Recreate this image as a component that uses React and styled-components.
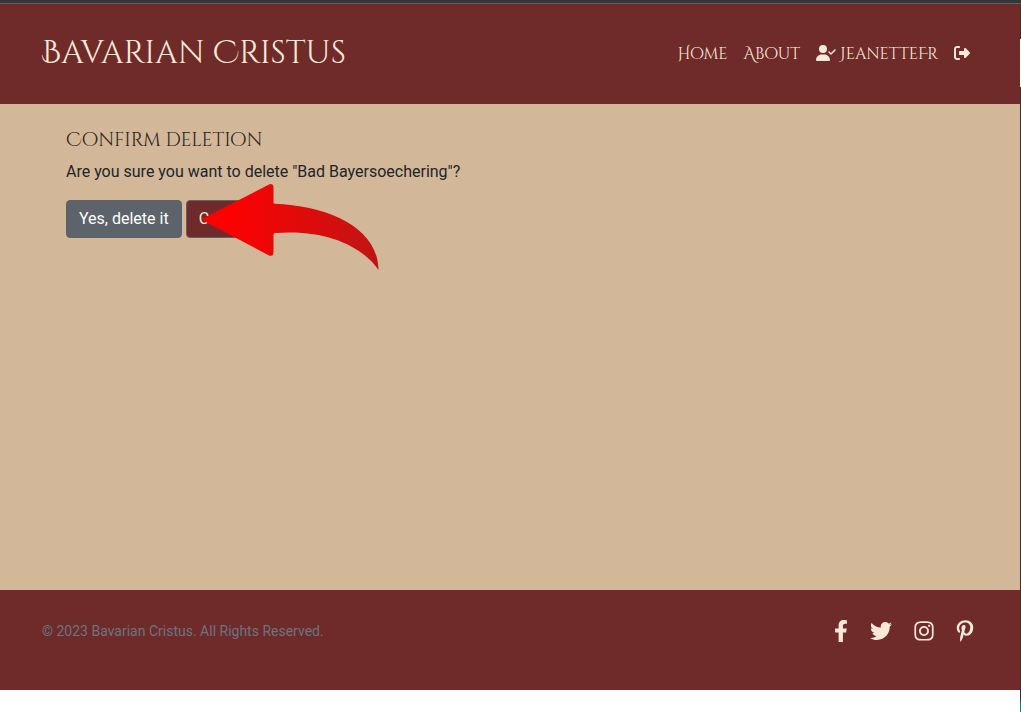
import React from "react";
import styled, { createGlobalStyle } from "styled-components";
import { FaFacebookF } from "react-icons/fa";
import {
  FaUserCheck,
  FaRightFromBracket,
  FaTwitter,
  FaInstagram,
  FaPinterestP,
} from "react-icons/fa6";

const display = `"Cinzel Decorative", "Liberation Serif", serif`;
const wine = "#6f2b2a";
const cream = "#fbe9d7";

const GlobalStyle = createGlobalStyle`
  *, *::before, *::after { box-sizing: border-box; }
  body {
    margin: 0;
    background: #fff;
    color: #212529;
    font: 16px/24px Roboto, sans-serif;
  }
`;

const Frame = styled.div`
  display: flex;
  flex-direction: column;
  min-height: 100vh;
`;

const BrowserBar = styled.div`
  height: 4px;
  background: #35363a;
  border-bottom: 1px solid #5f6064;
`;

const Viewport = styled.div`
  display: flex;
  flex: 1;
`;

const Page = styled.div`
  display: flex;
  flex: 1;
  flex-direction: column;
  min-width: 0;
`;

const Edge = styled.div`
  display: flex;
  flex-direction: column;
  width: 1px;
  background: #303438;
`;

const EdgeMark = styled.div`
  height: ${(p) => p.$height}px;
  margin-top: ${(p) => p.$top};
  background: ${(p) => p.$color};
`;

const Header = styled.header`
  display: flex;
  align-items: center;
  justify-content: space-between;
  height: 100px;
  padding: 0 50px 0 42px;
  background: ${wine};
`;

const Brand = styled.a`
  color: ${cream};
  font: 32px/48px ${display};
  text-decoration: none;
`;

const Nav = styled.nav`
  display: flex;
  align-items: center;
  gap: 16px;
`;

const NavLink = styled.a`
  color: ${cream};
  font: 16px/24px ${display};
  text-decoration: none;
  white-space: nowrap;

  svg {
    height: 16px;
    vertical-align: -2px;
  }
`;

const UserName = styled.span`
  margin-left: 4px;
`;

const Main = styled.main`
  flex: 1;
  padding: 24px 66px;
  background: #d2b799;
`;

const Title = styled.h1`
  margin: 0 0 8px;
  color: #2e2620;
  font: 19px/24px ${display};
`;

const Question = styled.p`
  margin: 0 0 16px;
`;

const Actions = styled.form`
  position: relative;
  display: flex;
  gap: 4px;
`;

const Button = styled.button`
  height: 38px;
  padding: 0 12px;
  border: 1px solid #5c636a;
  border-radius: 4px;
  background: ${(p) => (p.$primary ? wine : "#5c636a")};
  color: ${(p) => (p.$primary ? cream : "#fff")};
  font: 16px/24px Roboto, sans-serif;
  cursor: pointer;
`;

const Arrow = styled.svg`
  position: absolute;
  top: -17px;
  left: 136px;
  width: 178px;
  height: 88px;
  pointer-events: none;
`;

const Footer = styled.footer`
  display: flex;
  align-items: center;
  justify-content: space-between;
  height: 100px;
  margin-bottom: 22px;
  padding: 0 47px 18px 42px;
  background: ${wine};
`;

const Copyright = styled.small`
  color: #6c757d;
  font-size: 14px;
`;

const Social = styled.nav`
  display: flex;
  align-items: center;
  gap: 22px;
`;

const SocialLink = styled.a`
  display: flex;
  justify-content: center;
  width: ${(p) => p.$width}px;
  color: ${cream};

  svg {
    flex: none;
    width: 22px;
    height: 22px;
  }
`;

export default function App() {
  return (
    <>
      <GlobalStyle />
      <Frame>
        <BrowserBar />
        <Viewport>
          <Page>
            <Header>
              <Brand href="#">Bavarian Cristus</Brand>
              <Nav aria-label="Main">
                <NavLink href="#home">Home</NavLink>
                <NavLink href="#about">About</NavLink>
                <NavLink href="#profile">
                  <FaUserCheck size={20} />
                  <UserName>JeanetteFr</UserName>
                </NavLink>
                <NavLink href="#logout" aria-label="Log out">
                  <FaRightFromBracket size={16} />
                </NavLink>
              </Nav>
            </Header>
            <Main>
              <Title>Confirm deletion</Title>
              <Question>
                Are you sure you want to delete "Bad Bayersoechering"?
              </Question>
              <Actions onSubmit={(e) => e.preventDefault()}>
                <Button type="submit">Yes, delete it</Button>
                <Button type="button" $primary>
                  Cancel
                </Button>
                <Arrow viewBox="0 0 178 88" aria-hidden="true">
                  <defs>
                    <linearGradient id="arrow" x1="0" x2="1" y1="0" y2="0">
                      <stop offset="0.12" stopColor="#ff0000" />
                      <stop offset="1" stopColor="#c01515" />
                    </linearGradient>
                  </defs>
                  <path
                    fill="url(#arrow)"
                    d="M1 37.500 Q-1 36.500 1 35.500 L67 1.500 Q71 0 71.500 4 V19.500 Q71.500 20.700 73 20.700 C126 23 176 44 176.500 87 C160 63 124 46 73 50 Q71.500 50 71.500 51.500 V69 Q71.500 74 67 72.500 Z"
                  />
                </Arrow>
              </Actions>
            </Main>
            <Footer>
              <Copyright>© 2023 Bavarian Cristus. All Rights Reserved.</Copyright>
              <Social aria-label="Social media">
                <SocialLink href="#facebook" aria-label="Facebook" $width={14}>
                  <FaFacebookF />
                </SocialLink>
                <SocialLink href="#twitter" aria-label="Twitter" $width={22}>
                  <FaTwitter />
                </SocialLink>
                <SocialLink href="#instagram" aria-label="Instagram" $width={20}>
                  <FaInstagram />
                </SocialLink>
                <SocialLink href="#pinterest" aria-label="Pinterest" $width={17}>
                  <FaPinterestP />
                </SocialLink>
              </Social>
            </Footer>
          </Page>
          <Edge>
            <EdgeMark $height={48} $top="35px" $color="#fff" />
            <EdgeMark $height={10} $top="auto" $color="#118866" />
          </Edge>
        </Viewport>
      </Frame>
    </>
  );
}
